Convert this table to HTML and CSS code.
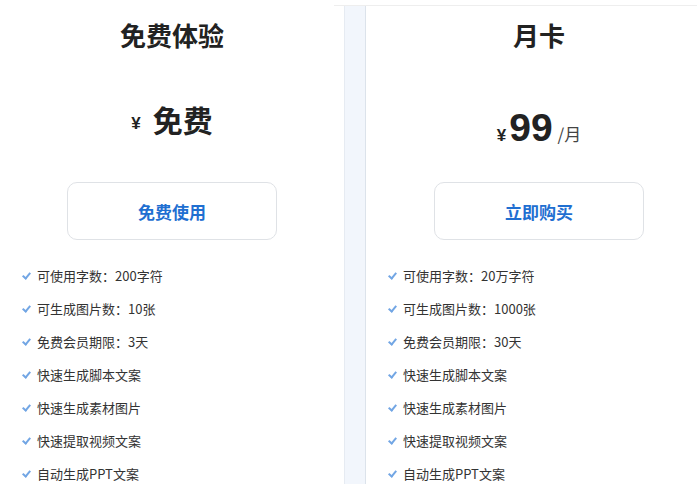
FILE: index.html
```html
<!DOCTYPE html>
<html lang="zh-CN">
<head>
    <meta charset="UTF-8">
    <meta name="viewport" content="width=device-width, initial-scale=1.0">
    <title>会员套餐</title>
    <link rel="stylesheet" href="styles.css">
</head>
<body>
    <div class="topline"></div>
    <div class="pricing">
        <!-- 免费体验 -->
        <div class="plan plan-free">
            <h2 class="plan-title">免费体验</h2>
            <div class="plan-price price-free">
                <span class="currency">¥</span>
                <span class="amount amount-text">免费</span>
            </div>
            <button class="plan-btn">免费使用</button>
            <ul class="features">
                <li>可使用字数：200字符</li>
                <li>可生成图片数：10张</li>
                <li>免费会员期限：3天</li>
                <li>快速生成脚本文案</li>
                <li>快速生成素材图片</li>
                <li>快速提取视频文案</li>
                <li>自动生成PPT文案</li>
            </ul>
        </div>

        <div class="plan-gap"></div>

        <!-- 月卡 -->
        <div class="plan plan-month">
            <h2 class="plan-title">月卡</h2>
            <div class="plan-price">
                <span class="currency currency-tight">¥</span>
                <span class="amount">99</span>
                <span class="unit">/月</span>
            </div>
            <button class="plan-btn">立即购买</button>
            <ul class="features">
                <li>可使用字数：20万字符</li>
                <li>可生成图片数：1000张</li>
                <li>免费会员期限：30天</li>
                <li>快速生成脚本文案</li>
                <li>快速生成素材图片</li>
                <li>快速提取视频文案</li>
                <li>自动生成PPT文案</li>
            </ul>
        </div>
    </div>
</body>
</html>
```

FILE: styles.css
```css
body {
    margin: 0;
    padding: 0;
    background-color: #ffffff;
    font-family: "Noto Sans CJK SC", "Noto Sans", sans-serif;
    color: #222;
    overflow: hidden;
}
.topline {
    height: 1px;
    margin-top: 5px;
    margin-left: 334px;
    background-color: #eeeeee;
}
.pricing {
    display: flex;
    align-items: stretch;
    height: 478px;
}
.plan {
    flex: 0 0 auto;
    display: flex;
    flex-direction: column;
    align-items: center;
    background-color: #ffffff;
}
.plan-free {
    width: 344px;
}
.plan-month {
    width: 346px;
}
.plan-gap {
    flex: 0 0 auto;
    width: 20px;
    background-color: #f2f6fc;
    border-left: 1px solid #e6ebf2;
    border-right: 1px solid #dce3eb;
}
.plan-title {
    margin: 14px 0 0;
    font-size: 26px;
    line-height: 30px;
    font-weight: 700;
    color: #222;
}
.plan-price {
    display: flex;
    align-items: baseline;
    justify-content: center;
    height: 48px;
    margin-top: 54px;
    color: #222;
}
.price-free {
    position: relative;
    top: -9px;
}
.price-free .currency {
    position: relative;
    top: -3px;
}
.currency {
    font-family: "Liberation Sans", sans-serif;
    font-size: 17px;
    font-weight: 700;
    margin-right: 12px;
}
.currency-tight {
    margin-right: 3px;
}
.amount {
    font-family: "Liberation Sans", sans-serif;
    font-size: 39px;
    font-weight: 700;
    line-height: 48px;
}
.amount-text {
    font-family: "Noto Sans CJK SC", sans-serif;
    font-size: 30px;
}
.unit {
    font-size: 17px;
    color: #444;
    margin-left: 5px;
}
.plan-btn {
    width: 210px;
    height: 58px;
    margin-top: 30px;
    background-color: #ffffff;
    border: 1px solid #dfe2e6;
    border-radius: 10px;
    color: #1f6fd1;
    font-family: "Noto Sans CJK SC", sans-serif;
    font-size: 17px;
    font-weight: 700;
    cursor: pointer;
}
.features {
    align-self: stretch;
    list-style: none;
    margin: 28px 0 0;
    padding: 0 0 0 23px;
}
.features li {
    position: relative;
    height: 33px;
    line-height: 15px;
    padding-left: 14px;
    font-size: 13px;
    color: #333;
}
.features li:last-child {
    height: 15px;
}
.features li::before {
    content: "";
    position: absolute;
    left: 1px;
    top: 3px;
    width: 3px;
    height: 6px;
    border-right: 2px solid #5a97e0;
    border-bottom: 2px solid #5a97e0;
    transform: rotate(40deg);
    opacity: 0.85;
}
```
